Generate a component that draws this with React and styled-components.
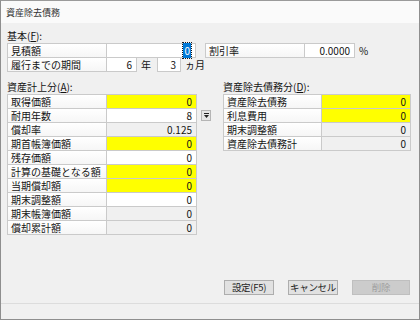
import React from 'react';
import styled, { createGlobalStyle } from 'styled-components';

const GlobalStyle = createGlobalStyle`
  html, body {
    margin: 0;
    padding: 0;
    background: #f0f0f0;
  }
  body {
    font-family: "Noto Sans CJK JP", "Noto Sans", sans-serif;
  }
`;

const TONES = {
  white: '#ffffff',
  yellow: '#ffff00',
  gray: '#f0f0f0',
};

const Window = styled.div`
  width: 420px;
  height: 320px;
  box-sizing: border-box;
  border: 1px solid #8e8e8e;
  border-top-color: #9a9a9a;
  background: #f0f0f0;
  display: flex;
  flex-direction: column;
  font-size: 10px;
  color: #141414;
`;

const TitleBar = styled.div`
  height: 22px;
  flex-shrink: 0;
  background: #fafafa;
  display: flex;
  align-items: center;
  padding-left: 5px;
  font-size: 9px;
  color: #333;
`;

const Body = styled.div`
  flex: 1;
  padding: 6px 9px 0 6px;
  display: flex;
  flex-direction: column;
`;

const SectionTitle = styled.div`
  height: 13px;
  line-height: 13px;
  margin-bottom: 1px;
  white-space: nowrap;
  u {
    text-decoration: underline;
    text-underline-offset: 1px;
  }
`;

const TopRows = styled.div`
  display: flex;
  flex-direction: column;
`;

const TopLine = styled.div`
  display: flex;
  align-items: flex-start;
  & + & {
    margin-top: -1px;
  }
`;

const Rows = styled.div`
  display: flex;
  flex-direction: column;
  width: ${(p) => p.$width}px;
`;

const Row = styled.div`
  display: flex;
  height: 15px;
  & + & {
    margin-top: -1px;
  }
`;

const Label = styled.div`
  width: ${(p) => p.$width || 100}px;
  flex-shrink: 0;
  height: 15px;
  box-sizing: border-box;
  border: 1px solid #cacaca;
  background: linear-gradient(to bottom, #ffffff, #f6f6f6);
  padding-left: 3px;
  line-height: 13px;
  white-space: nowrap;
  overflow: hidden;
`;

const Value = styled.div`
  width: ${(p) => (p.$width ? `${p.$width}px` : 'auto')};
  flex: ${(p) => (p.$width ? '0 0 auto' : '1')};
  height: 15px;
  box-sizing: border-box;
  margin-left: -1px;
  border: 1px solid #cacaca;
  background: ${(p) => TONES[p.$tone || 'white']};
  padding-right: 4px;
  text-align: right;
  line-height: 13px;
  white-space: nowrap;
`;

const Unit = styled.span`
  padding: 0 6px 0 4px;
  line-height: 15px;
  white-space: nowrap;
`;

const Selected = styled.span`
  background: #0078d7;
  color: #fff;
  padding: 0 1px;
  outline: 1px dotted #1a1a1a;
`;

const Panels = styled.div`
  display: flex;
  margin-top: 8px;
  gap: 12px;
`;

const Panel = styled.div`
  display: flex;
  flex-direction: column;
`;

const TableWithSide = styled.div`
  display: flex;
  gap: 4px;
`;

const Side = styled.div`
  padding-top: 16px;
`;

const SpinButton = styled.div`
  width: 10px;
  height: 11px;
  box-sizing: border-box;
  border: 1px solid #b5b5b5;
  background: #e6e6e6;
  display: flex;
  align-items: center;
  justify-content: center;
`;

const Footer = styled.div`
  display: flex;
  justify-content: flex-end;
  gap: 14px;
  padding-bottom: 8px;
  margin-top: auto;
`;

const Button = styled.button`
  width: ${(p) => p.$width}px;
  height: 15px;
  box-sizing: border-box;
  border: 1px solid ${(p) => (p.disabled ? '#bfbfbf' : '#adadad')};
  background: ${(p) => (p.disabled ? '#cccccc' : '#e1e1e1')};
  color: ${(p) => (p.disabled ? '#a0a0a0' : '#1e1e1e')};
  font-family: inherit;
  font-size: 9.5px;
  line-height: 13px;
  white-space: nowrap;
  letter-spacing: -0.3px;
  padding: 0;
`;

const StatusBar = styled.div`
  height: 15px;
  flex-shrink: 0;
  border-top: 1px solid #dcdcdc;
`;

const leftRows = [
  { label: '取得価額', value: '0', tone: 'yellow' },
  { label: '耐用年数', value: '8', tone: 'white' },
  { label: '償却率', value: '0.125', tone: 'gray' },
  { label: '期首帳簿価額', value: '0', tone: 'yellow' },
  { label: '残存価額', value: '0', tone: 'white' },
  { label: '計算の基礎となる額', value: '0', tone: 'yellow' },
  { label: '当期償却額', value: '0', tone: 'yellow' },
  { label: '期末調整額', value: '0', tone: 'white' },
  { label: '期末帳簿価額', value: '0', tone: 'gray' },
  { label: '償却累計額', value: '0', tone: 'gray' },
];

const rightRows = [
  { label: '資産除去債務', value: '0', tone: 'yellow' },
  { label: '利息費用', value: '0', tone: 'yellow' },
  { label: '期末調整額', value: '0', tone: 'gray' },
  { label: '資産除去債務計', value: '0', tone: 'gray' },
];

const SpinIcon = () => (
  <svg width="7" height="7" viewBox="0 0 7 7">
    <line x1="1" y1="1.5" x2="6" y2="1.5" stroke="#222" strokeWidth="1" />
    <polygon points="1,3 6,3 3.5,6" fill="#222" />
  </svg>
);

const App = () => (
  <Window>
    <GlobalStyle />
    <TitleBar>資産除去債務</TitleBar>
    <Body>
      <SectionTitle>
        基本(<u>F</u>):
      </SectionTitle>
      <TopRows>
        <TopLine>
          <Label>見積額</Label>
          <Value $width={90}>
            <Selected>0</Selected>
          </Value>
          <Label style={{ marginLeft: 9 }}>割引率</Label>
          <Value $width={51}>0.0000</Value>
          <Unit>%</Unit>
        </TopLine>
        <TopLine>
          <Label>履行までの期間</Label>
          <Value $width={31}>6</Value>
          <Unit>年</Unit>
          <Value $width={24} style={{ marginLeft: 0 }}>3</Value>
          <Unit style={{ paddingRight: 0 }}>ヵ月</Unit>
        </TopLine>
      </TopRows>
      <Panels>
        <Panel>
          <SectionTitle>
            資産計上分(<u>A</u>):
          </SectionTitle>
          <TableWithSide>
            <Rows $width={190}>
              {leftRows.map((r) => (
                <Row key={r.label}>
                  <Label>{r.label}</Label>
                  <Value $tone={r.tone}>{r.value}</Value>
                </Row>
              ))}
            </Rows>
            <Side>
              <SpinButton>
                <SpinIcon />
              </SpinButton>
            </Side>
          </TableWithSide>
        </Panel>
        <Panel>
          <SectionTitle>
            資産除去債務分(<u>D</u>):
          </SectionTitle>
          <Rows $width={188}>
            {rightRows.map((r) => (
              <Row key={r.label}>
                <Label $width={99}>{r.label}</Label>
                <Value $tone={r.tone}>{r.value}</Value>
              </Row>
            ))}
          </Rows>
        </Panel>
      </Panels>
      <Footer>
        <Button $width={50}>設定(F5)</Button>
        <Button $width={50}>キャンセル</Button>
        <Button $width={58} disabled>
          削除
        </Button>
      </Footer>
    </Body>
    <StatusBar />
  </Window>
);

export default App;
